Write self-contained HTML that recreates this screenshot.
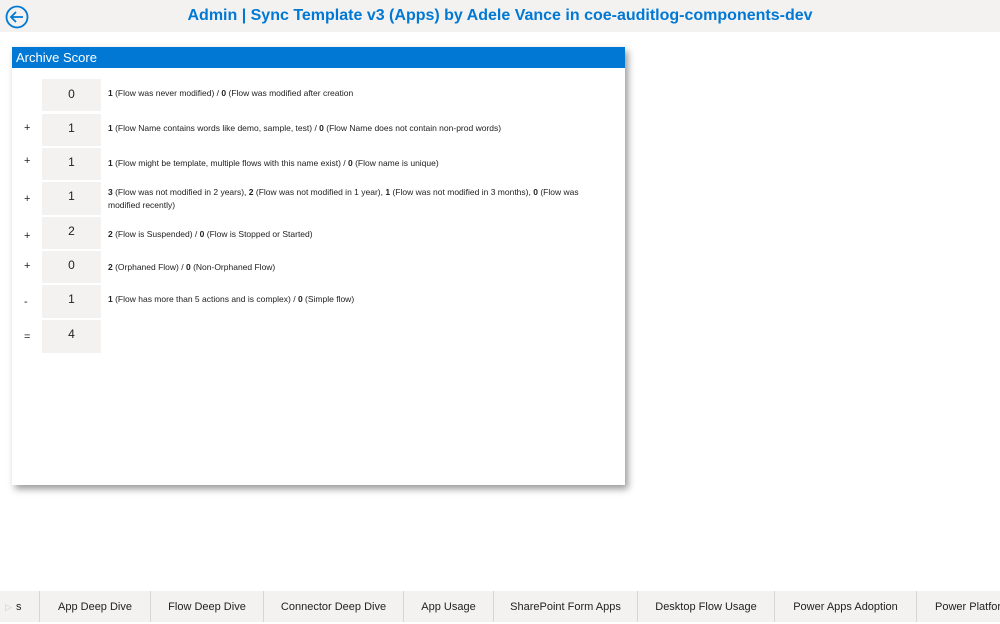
<!DOCTYPE html>
<html><head><style>
body{margin:0;width:1000px;height:622px;background:#fff;font-family:"Segoe UI","Liberation Sans",sans-serif;position:relative;overflow:hidden}
.hdr{position:absolute;left:0;top:0;width:1000px;height:32px;background:#f3f2f1}
.title{position:absolute;left:0;width:1000px;top:7px;text-align:center;color:#0078d4;font-weight:bold;font-size:16px}
.card{position:absolute;left:12px;top:47px;width:613px;height:438px;background:#fff;box-shadow:3px 4px 7px rgba(0,0,0,.4)}
.ch{height:21px;background:#0078d4;color:#fff;font-size:13px;line-height:21px;padding-left:4px}
.box{position:absolute;left:30px;width:59px;background:#f3f2f1;text-align:center;font-size:12px;color:#222}
.op{position:absolute;left:12px;font-size:11px;color:#222}
.tx{position:absolute;left:96px;width:500px;font-size:8.5px;color:#222;line-height:13px}
.tabs{position:absolute;left:0;top:591px;width:1000px;height:31px;background:#f3f2f1;font-size:11px;color:#222}
.tab{position:absolute;top:0;height:31px;line-height:33px;text-align:center;border-left:1px solid #d6d6d6}
</style></head><body>
<div class="hdr"></div>
<svg style="position:absolute;left:5px;top:5px" width="24" height="24" viewBox="0 0 24 24"><circle cx="12" cy="12" r="10.5" fill="none" stroke="#0078d4" stroke-width="1.8"/><path d="M18 12H6M11 7l-5 5 5 5" fill="none" stroke="#0078d4" stroke-width="1.8"/></svg>
<div class="title">Admin | Sync Template v3 (Apps) by Adele Vance in coe-auditlog-components-dev</div>
<div class="card"><div class="ch">Archive Score</div>
<div class="box" style="top:32px;height:32px;line-height:30px">0</div>
<div class="tx" style="top:40px"><b>1</b> (Flow was never modified) / <b>0</b> (Flow was modified after creation</div>
<div class="op" style="top:75px">+</div>
<div class="box" style="top:67px;height:32px;line-height:28px">1</div>
<div class="tx" style="top:75px"><b>1</b> (Flow Name contains words like demo, sample, test) / <b>0</b> (Flow Name does not contain non-prod words)</div>
<div class="op" style="top:108px">+</div>
<div class="box" style="top:101px;height:32px;line-height:28px">1</div>
<div class="tx" style="top:110px"><b>1</b> (Flow might be template, multiple flows with this name exist) / <b>0</b> (Flow name is unique)</div>
<div class="op" style="top:146px">+</div>
<div class="box" style="top:135px;height:33px;line-height:28px">1</div>
<div class="tx" style="top:139px"><b>3</b> (Flow was not modified in 2 years), <b>2</b> (Flow was not modified in 1 year), <b>1</b> (Flow was not modified in 3 months), <b>0</b> (Flow was modified recently)</div>
<div class="op" style="top:183px">+</div>
<div class="box" style="top:170px;height:32px;line-height:28px">2</div>
<div class="tx" style="top:181px"><b>2</b> (Flow is Suspended) / <b>0</b> (Flow is Stopped or Started)</div>
<div class="op" style="top:213px">+</div>
<div class="box" style="top:204px;height:32px;line-height:28px">0</div>
<div class="tx" style="top:214px"><b>2</b> (Orphaned Flow) / <b>0</b> (Non-Orphaned Flow)</div>
<div class="op" style="top:249px">-</div>
<div class="box" style="top:238px;height:33px;line-height:28px">1</div>
<div class="tx" style="top:246px"><b>1</b> (Flow has more than 5 actions and is complex) / <b>0</b> (Simple flow)</div>
<div class="op" style="top:284px">=</div>
<div class="box" style="top:273px;height:33px;line-height:28px">4</div>
</div>
<div class="tabs">
<div style="position:absolute;left:5px;top:0;line-height:33px;color:#ccc;font-size:9px">▷</div>
<div style="position:absolute;left:16px;top:0;line-height:33px">s</div>
<div class="tab" style="left:39px;width:110px">App Deep Dive</div>
<div class="tab" style="left:150px;width:112px">Flow Deep Dive</div>
<div class="tab" style="left:263px;width:139px">Connector Deep Dive</div>
<div class="tab" style="left:403px;width:89px">App Usage</div>
<div class="tab" style="left:493px;width:143px">SharePoint Form Apps</div>
<div class="tab" style="left:637px;width:136px">Desktop Flow Usage</div>
<div class="tab" style="left:774px;width:141px">Power Apps Adoption</div>
<div class="tab" style="left:916px;width:120px;text-align:left;padding-left:18px">Power Platform</div>
</div>
</body></html>
